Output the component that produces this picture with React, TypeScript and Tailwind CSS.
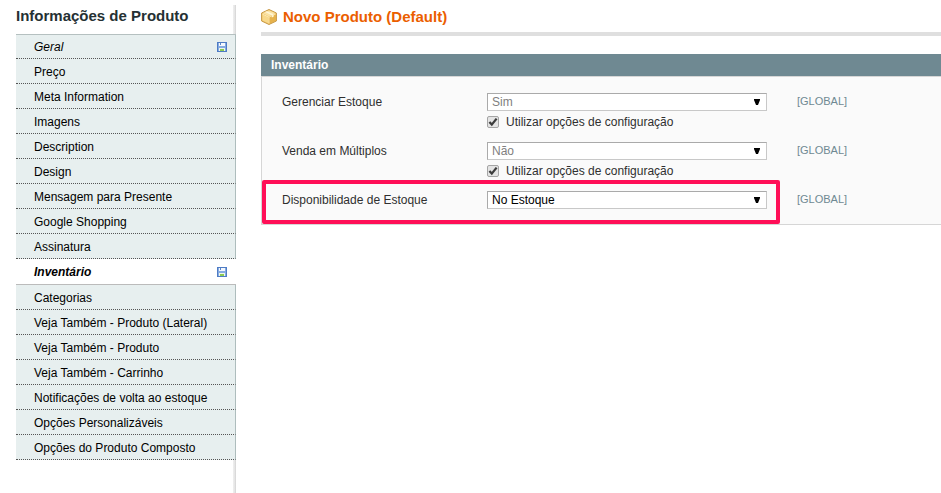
import React, { useState } from 'react';

const tabs = [
  { name: 'Geral', changed: true },
  { name: 'Preço' },
  { name: 'Meta Information' },
  { name: 'Imagens' },
  { name: 'Description' },
  { name: 'Design' },
  { name: 'Mensagem para Presente' },
  { name: 'Google Shopping' },
  { name: 'Assinatura' },
  { name: 'Inventário', changed: true },
  { name: 'Categorias' },
  { name: 'Veja Também - Produto (Lateral)' },
  { name: 'Veja Também - Produto' },
  { name: 'Veja Também - Carrinho' },
  { name: 'Notificações de volta ao estoque' },
  { name: 'Opções Personalizáveis' },
  { name: 'Opções do Produto Composto' },
];

const SaveIcon = () => (
  <svg className="w-[10px] h-[10px] shrink-0" viewBox="0 0 10 10" shapeRendering="crispEdges" aria-hidden="true">
    <path d="M0 0h10v10H0z" fill="#4f7cc4" />
    <path d="M1 1h8v8H1z" fill="#86abe2" />
    <path d="M2 1h6v3H2z" fill="#f4f8fe" />
    <path d="M3 1h1v2H3z" fill="#5b86c8" />
    <path d="M2 6h6v3H2z" fill="#eef6ea" />
    <path d="M3 7h4v2H3z" fill="#8ccb52" />
  </svg>
);

const BoxIcon = () => (
  <svg className="w-4 h-4 shrink-0" viewBox="0 0 16 16" aria-hidden="true">
    <path d="M8 .5 15.4 4v8L8 15.5.6 12V4z" fill="#e9b550" stroke="#c79a48" strokeWidth="1" strokeLinejoin="round" />
    <path d="M8 1.2 14.6 4.3 8 7.4 1.4 4.3z" fill="#fbe3a4" />
    <path d="M1.3 5 7.6 8v6.6L1.3 11.6z" fill="#f8d98c" />
    <path d="M8.4 8l6.3-3v6.6l-6.3 3z" fill="#e6b24c" />
    <path d="M4 3.1 10.8 6.2v2.4l1.8-.9V5.3L5.8 2.2z" fill="#fff6d8" />
    <path d="M1.3 5 8 8.1 14.7 5M8 8.1v6.5" fill="none" stroke="#fff0c0" strokeWidth=".8" />
  </svg>
);

const Field = ({ id, label, options, useConfig = false }) => {
  const [config, setConfig] = useState(useConfig);

  return (
    <div className="flex items-start h-[49px]">
      <label htmlFor={id} className="w-[205px] shrink-0 leading-[18px]">{label}</label>
      <div className="w-[280px] shrink-0">
        <div className="relative">
          <select
            id={id}
            disabled={config}
            className="block w-full h-[18px] pl-1 appearance-none border border-[#aaa] border-b-[#c8c8c8] border-r-[#c8c8c8] bg-white text-black leading-4 opacity-100 disabled:text-[#808080]"
          >
            {options.map(option => <option key={option}>{option}</option>)}
          </select>
          <svg className="absolute right-[7px] top-[6px] w-[6px] h-[6px] pointer-events-none" viewBox="0 0 6 6" aria-hidden="true">
            <path d="M0 0h6v1L4 6H2L0 1z" fill="#000" />
          </svg>
        </div>
        {useConfig && (
          <label className="flex items-center mt-1 h-[13px]">
            <span className="relative w-3 h-3 mr-[7px]">
              <input
                type="checkbox"
                checked={config}
                onChange={() => setConfig(!config)}
                className="peer block w-3 h-3 appearance-none rounded-[2px] border border-[#a5a5a5] bg-[#e4e4e4]"
              />
              <svg className="absolute inset-0 hidden peer-checked:block pointer-events-none" viewBox="0 0 12 12" aria-hidden="true">
                <path d="M2.4 6 4.8 8.6l4.8-6" fill="none" stroke="#3c3c3c" strokeWidth="2.3" />
              </svg>
            </span>
            Utilizar opções de configuração
          </label>
        )}
      </div>
      <span className="ml-[30px] text-[11px] leading-4 text-[#6f8992]">[GLOBAL]</span>
    </div>
  );
};

const App = () => {
  const [active, setActive] = useState('Inventário');

  const tabStyle = (tab, index) => {
    if (tab.name === active) return 'h-[26px] pr-px bg-white border-b border-[#bbb] font-bold';
    const base = 'bg-[#e7efef] border-b border-dotted border-b-[#555] border-r border-r-[#aebdbd] [border-right-style:solid]';
    return index === 0 ? `h-6 ${base}` : `h-[25px] pt-px ${base}`;
  };

  return (
    <div className="flex min-h-screen bg-white font-['Liberation_Sans',Arial,sans-serif] text-xs text-[#2f2f2f]">
      <aside className="w-[236px] shrink-0 mt-[5px] pl-4 bg-[linear-gradient(to_right,#efefef,#e4e4e4_2px,#cfcfcf)] bg-[length:3px_100%] bg-right bg-no-repeat">
        <h3 className="h-[29px] pt-[2px] text-[15px] leading-[18px] font-bold text-[#253033]">Informações de Produto</h3>
        <ul className="border-t border-[#b5c0c0]">
          {tabs.map((tab, index) => (
            <li key={tab.name} className={tabStyle(tab, index)}>
              <a
                href="#"
                onClick={() => setActive(tab.name)}
                className={`flex items-center justify-between h-full pl-[18px] pr-2 text-black ${tab.changed ? 'italic' : ''}`}
              >
                {tab.name}
                {tab.changed && <SaveIcon />}
              </a>
            </li>
          ))}
        </ul>
      </aside>

      <main className="flex-1 min-w-0 pl-[25px]">
        <div className="flex items-center gap-[6px] h-9 pt-[5px] pb-1 border-b-4 border-[#dfdfdf]">
          <BoxIcon />
          <h1 className="text-[15px] font-bold text-[#eb5e00]">Novo Produto (Default)</h1>
        </div>

        <section className="mt-[18px]">
          <h2 className="h-[22px] pl-[10px] leading-[22px] font-bold text-white bg-[#6f8992]">Inventário</h2>
          <div className="relative h-[149px] pt-4 pl-5 border border-r-0 border-[#d6d6d6] bg-[#fafafa]">
            <Field id="manage_stock" label="Gerenciar Estoque" options={['Sim', 'Não']} useConfig />
            <Field id="enable_qty_increments" label="Venda em Múltiplos" options={['Não', 'Sim']} useConfig />
            <Field id="is_in_stock" label="Disponibilidade de Estoque" options={['No Estoque', 'Fora de Estoque']} />
            {/* highlight around the stock availability row */}
            <div className="absolute left-0 bottom-0 w-[518px] h-11 rounded-[2px] border-4 border-[#ff0f57] pointer-events-none" />
          </div>
        </section>
      </main>
    </div>
  );
};

export default App;
